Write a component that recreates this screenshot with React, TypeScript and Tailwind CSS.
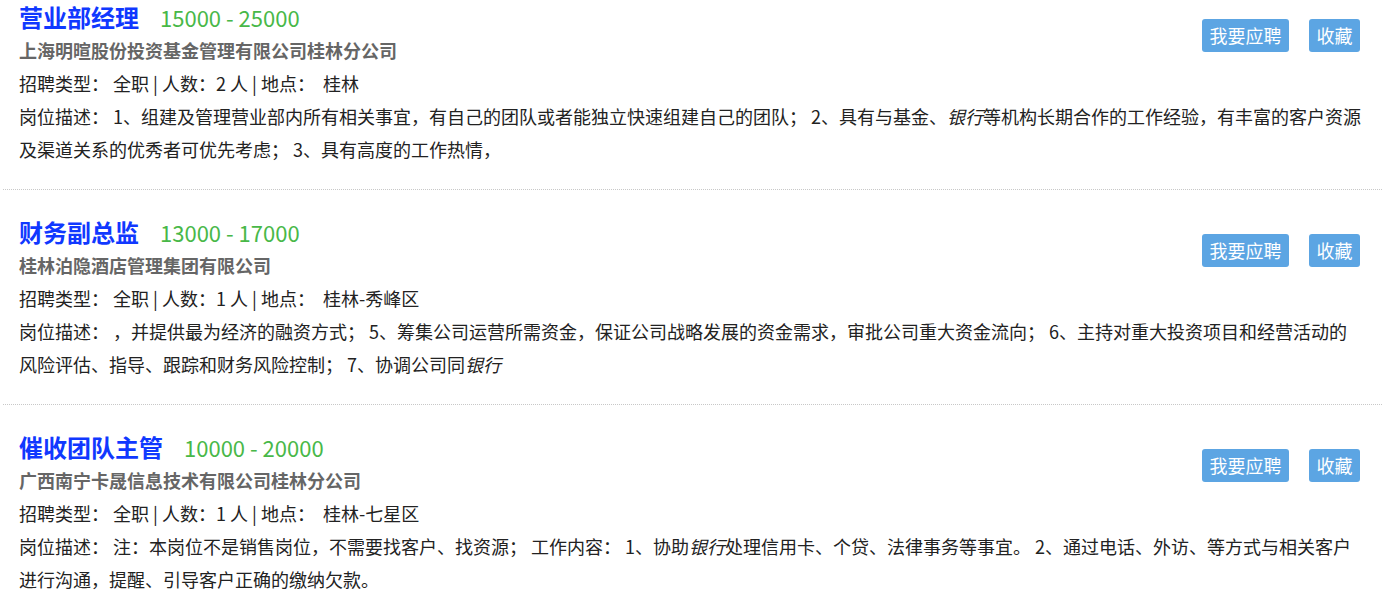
const jobs = [
  {
    title: "营业部经理",
    salary: "15000 - 25000",
    company: "上海明暄股份投资基金管理有限公司桂林分公司",
    people: "2",
    place: "桂林",
    desc: [
      <>
        岗位描述： 1、组建及管理营业部内所有相关事宜，有自己的团队或者能独立快速组建自己的团队； 2、具有与基金、<em>银行</em>
        等机构长期合作的工作经验，有丰富的客户资源
      </>,
      <>及渠道关系的优秀者可优先考虑； 3、具有高度的工作热情，</>,
    ],
  },
  {
    title: "财务副总监",
    salary: "13000 - 17000",
    company: "桂林泊隐酒店管理集团有限公司",
    people: "1",
    place: "桂林-秀峰区",
    desc: [
      <>
        岗位描述： ，并提供最为经济的融资方式； 5、筹集公司运营所需资金，保证公司战略发展的资金需求，审批公司重大资金流向； 6、主持对重大投资项目和经营活动的
      </>,
      <>
        风险评估、指导、跟踪和财务风险控制； 7、协调公司同<em>银行</em>
      </>,
    ],
  },
  {
    title: "催收团队主管",
    salary: "10000 - 20000",
    company: "广西南宁卡晟信息技术有限公司桂林分公司",
    people: "1",
    place: "桂林-七星区",
    desc: [
      <>
        岗位描述： 注：本岗位不是销售岗位，不需要找客户、找资源； 工作内容： 1、协助<em>银行</em>
        处理信用卡、个贷、法律事务等事宜。 2、通过电话、外访、等方式与相关客户
      </>,
      <>进行沟通，提醒、引导客户正确的缴纳欠款。</>,
    ],
  },
];

export default function App() {
  return (
    <div
      className="min-h-screen bg-white text-[18px] text-[#222]"
      style={{ fontFamily: '"Noto Sans CJK SC", "Liberation Sans", sans-serif' }}
    >
      <ul className="ml-[3px] mr-[7px]">
        {jobs.map((job) => (
          <li
            key={job.title}
            className="border-b border-dotted border-[#c8c8c8] pb-[23px] pl-[16px] pr-[12px] pt-[25px] first:pt-0"
          >
            <div className="flex items-start">
              <div className="flex-1">
                <div className="flex h-[34px] items-center">
                  <span className="text-[24px] font-bold text-[#1038ff]">{job.title}</span>
                  <span className="ml-[21px] text-[22px] text-[#48b848]">{job.salary}</span>
                </div>
                <div className="h-[33px] font-bold leading-[33px] text-[#666]">{job.company}</div>
                <div className="h-[33px] leading-[33px]">
                  招聘类型： 全职 | 人数：{job.people} 人 | 地点：&nbsp; {job.place}
                </div>
              </div>
              <div className="mr-[10px] mt-[19px] flex gap-[20px]">
                <button className="h-[33px] w-[87px] rounded-[3px] bg-[#5ca5e3] text-[18px] text-white">
                  我要应聘
                </button>
                <button className="h-[33px] w-[51px] rounded-[3px] bg-[#5ca5e3] text-[18px] text-white">
                  收藏
                </button>
              </div>
            </div>
            <div className="leading-[33px]">
              {job.desc.map((line, i) => (
                <div key={i} className="h-[33px] whitespace-nowrap">
                  {line}
                </div>
              ))}
            </div>
          </li>
        ))}
      </ul>
    </div>
  );
}
